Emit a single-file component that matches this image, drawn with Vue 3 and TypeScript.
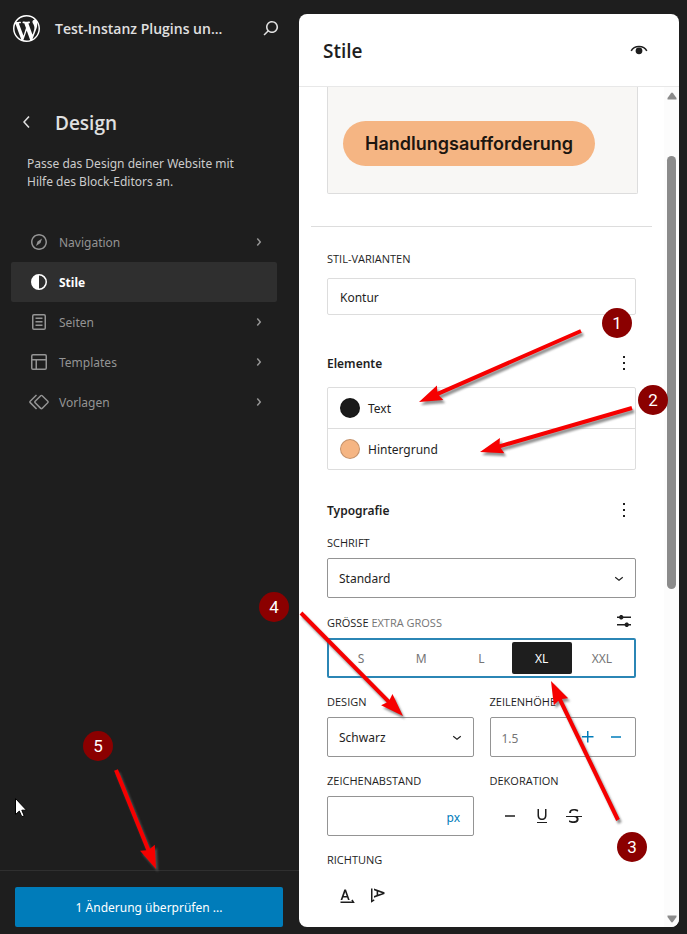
<script setup lang="ts">
import { ref } from 'vue'

interface NavItem {
  label: string
  icon: string
  active?: boolean
}

interface Arrow {
  x1: number
  y1: number
  x2: number
  y2: number
}

interface Marker {
  n: number
  x: number
  y: number
}

const icons: Record<string, string> = {
  search:
    'M13 5c-3.3 0-6 2.7-6 6 0 1.4.5 2.7 1.3 3.7l-3.8 3.8 1.1 1.1 3.8-3.8c1 .8 2.3 1.3 3.7 1.3 3.3 0 6-2.7 6-6S16.3 5 13 5zm0 10.5c-2.5 0-4.5-2-4.5-4.5s2-4.5 4.5-4.5 4.5 2 4.5 4.5-2 4.5-4.5 4.5z',
  chevronLeft: 'M14.6 7l-1.2-1L8 12l5.4 6 1.2-1-4.6-5z',
  chevronRight:
    'M10.8622 8.04053L14.2805 12.0286L10.8622 16.0167L9.72327 15.0405L12.3049 12.0286L9.72327 9.01672L10.8622 8.04053Z',
  chevronDown: 'M17.5 11.6L12 16l-5.5-4.4.9-1.2L12 14l4.5-3.6 1 1.2z',
  navigation:
    'M12 4c-4.4 0-8 3.6-8 8s3.6 8 8 8 8-3.6 8-8-3.6-8-8-8zm0 14.5c-3.6 0-6.5-2.9-6.5-6.5S8.4 5.5 12 5.5s6.5 2.9 6.5 6.5-2.9 6.5-6.5 6.5zM9 16l4.5-3L15 8.4l-4.5 3L9 16z',
  styles: 'M20 12a8 8 0 11-16 0 8 8 0 0116 0zm-1.5 0a6.5 6.5 0 01-6.5 6.5v-13a6.5 6.5 0 016.5 6.5z',
  pages:
    'M15.5 7.5h-7V9h7V7.5Zm-7 3.5h7v1.5h-7V11Zm7 3.5h-7V16h7v-1.5ZM17 4H7a2 2 0 0 0-2 2v12a2 2 0 0 0 2 2h10a2 2 0 0 0 2-2V6a2 2 0 0 0-2-2ZM7 5.5h10a.5.5 0 0 1 .5.5v12a.5.5 0 0 1-.5.5H7a.5.5 0 0 1-.5-.5V6a.5.5 0 0 1 .5-.5Z',
  layout:
    'M18 5.5H6a.5.5 0 00-.5.5v3h13V6a.5.5 0 00-.5-.5zm.5 5H10v8h8a.5.5 0 00.5-.5v-7.5zm-10 0h-3V18a.5.5 0 00.5.5h2.5v-8zM6 4h12a2 2 0 012 2v12a2 2 0 01-2 2H6a2 2 0 01-2-2V6a2 2 0 012-2z',
  symbol:
    'M21.3 10.8l-5.6-5.6c-.7-.7-1.8-.7-2.5 0l-5.6 5.6c-.7.7-.7 1.8 0 2.5l5.6 5.6c.3.3.8.5 1.2.5s.9-.2 1.2-.5l5.6-5.6c.8-.7.8-1.9.1-2.5zm-1 1.4l-5.6 5.6c-.1.1-.3.1-.4 0l-5.6-5.6c-.1-.1-.1-.3 0-.4l5.6-5.6s.1-.1.2-.1.1 0 .2.1l5.6 5.6c.1.1.1.3 0 .4zm-16.6-.4L10 5.5l-1-1-6.3 6.3c-.7.7-.7 1.8 0 2.5L9 19.5l1.1-1.1-6.3-6.3c-.2 0-.2-.2-.1-.3z',
  more: 'M13 19h-2v-2h2v2zm0-6h-2v-2h2v2zm0-6h-2V5h2v2z',
  settings:
    'm19 7.5h-7.628c-.3089-.87389-1.1423-1.5-2.122-1.5-.97966 0-1.81309.62611-2.12197 1.5h-2.12803v1.5h2.12803c.30888.87389 1.14231 1.5 2.12197 1.5.9797 0 1.8131-.62611 2.122-1.5h7.628zM19 15h-2.128c-.3089-.8739-1.1423-1.5-2.122-1.5s-1.8131.6261-2.122 1.5h-7.628v1.5h7.628c.3089.8739 1.1423 1.5 2.122 1.5s1.8131-.6261 2.122-1.5h2.128z',
  plus: 'M11 12.5V17.5H12.5V12.5H17.5V11H12.5V6H11V11H6V12.5H11Z',
  minus: 'M7 11.25h10v1.5H7z',
  underline:
    'M7 18v1h10v-1H7zm5-2c1.5 0 2.6-.4 3.4-1.2.8-.8 1.1-2 1.1-3.5V5H15v5.8c0 1.2-.2 2.1-.6 2.8-.4.7-1.2 1-2.4 1s-2-.3-2.4-1c-.4-.7-.6-1.6-.6-2.8V5H7.5v6.2c0 1.5.4 2.7 1.1 3.5.8.9 1.9 1.3 3.4 1.3z',
  strike:
    'M9.1 9v-.5c0-.6.2-1.1.7-1.4.5-.3 1.2-.5 2-.5.7 0 1.4.1 2.1.3.7.2 1.4.5 2.1.9l.2-1.9c-.6-.3-1.2-.5-1.9-.7-.8-.1-1.6-.2-2.4-.2-1.5 0-2.7.3-3.6 1-.8.7-1.2 1.5-1.2 2.6V9h2zM20 12H4v1h8.3c.3.1.6.2.8.3.5.2.9.5 1.1.8.3.3.4.7.4 1.2 0 .7-.2 1.1-.8 1.5-.5.3-1.2.5-2.1.5-.8 0-1.6-.1-2.4-.3-.8-.2-1.5-.5-2.2-.8L7 18.1c.5.2 1.2.4 2 .6.8.2 1.6.3 2.4.3 1.7 0 3-.3 3.9-1 .9-.7 1.3-1.6 1.3-2.8 0-.9-.2-1.7-.7-2.2H20v-1z',
  horizontal:
    'M8.2 14.4h3.9L13 17h1.7L11 6.5H9.3L5.6 17h1.7l.9-2.6zm2-5.5 1.4 4H8.8l1.4-4zm7.4 7.5-1.3.8.8 1.4H5.5V20h14.3l-2.2-3.6z',
  vertical:
    'M7 5.6v1.7l2.6.9v3.9L7 13v1.7L17.5 11V9.3L7 5.6zm4.2 6V8.8l4 1.4-4 1.4zm-5.7 5.6V5.5H4v14.3l3.6-2.2-.8-1.3-1.3.9z',
}

const nav: NavItem[] = [
  { label: 'Navigation', icon: 'navigation' },
  { label: 'Stile', icon: 'styles', active: true },
  { label: 'Seiten', icon: 'pages' },
  { label: 'Templates', icon: 'layout' },
  { label: 'Vorlagen', icon: 'symbol' },
]

const colors = [
  { label: 'Text', tone: 'dark' },
  { label: 'Hintergrund', tone: 'peach' },
]

const sizes = ['S', 'M', 'L', 'XL', 'XXL']
const size = ref('XL')
const lineHeight = ref('')
const spacing = ref('')

const arrows: Arrow[] = [
  { x1: 581, y1: 331, x2: 419, y2: 402 },
  { x1: 632, y1: 408, x2: 480, y2: 452 },
  { x1: 618, y1: 820, x2: 551, y2: 681 },
  { x1: 301, y1: 613, x2: 403, y2: 716 },
  { x1: 116, y1: 770, x2: 156, y2: 869 },
]

const markers: Marker[] = [
  { n: 1, x: 617, y: 323 },
  { n: 2, x: 653, y: 400 },
  { n: 3, x: 632, y: 847 },
  { n: 4, x: 274, y: 607 },
  { n: 5, x: 98, y: 746 },
]

// Outline of an arrow: a thin shaft that ends in a broad head.
function arrowPoints(a: Arrow): string {
  const len = Math.hypot(a.x2 - a.x1, a.y2 - a.y1)
  const ux = (a.x2 - a.x1) / len
  const uy = (a.y2 - a.y1) / len
  const head = 23
  const at = (along: number, side: number) =>
    `${(a.x1 + ux * along - uy * side).toFixed(1)},${(a.y1 + uy * along + ux * side).toFixed(1)}`
  return [
    at(0, -2),
    at(len - head + 2, -2),
    at(len - head, -8),
    at(len, 0),
    at(len - head, 8),
    at(len - head + 2, 2),
    at(0, 2),
  ].join(' ')
}
</script>

<template>
  <div class="app">
    <aside class="sidebar">
      <header class="site">
        <a class="logo" href="#" aria-label="WordPress">
          <svg viewBox="0 0 20 20" width="27" height="27" fill="currentColor">
            <path
              d="M20 10c0-5.51-4.49-10-10-10C4.48 0 0 4.49 0 10c0 5.52 4.48 10 10 10 5.51 0 10-4.48 10-10zM7.78 15.37L4.37 6.22c.55-.02 1.17-.08 1.17-.08.5-.06.44-1.13-.06-1.11 0 0-1.45.11-2.37.11-.18 0-.37 0-.58-.01C4.12 2.69 6.87 1.11 10 1.11c2.33 0 4.45.87 6.05 2.34-.68-.11-1.65.39-1.65 1.58 0 .74.45 1.36.9 2.1.35.61.55 1.36.55 2.46 0 1.49-1.4 5-1.4 5l-3.03-8.37c.54-.02.82-.17.82-.17.5-.05.44-1.25-.06-1.22 0 0-1.44.12-2.38.12-.87 0-2.33-.12-2.33-.12-.5-.03-.56 1.2-.06 1.22l.92.08 1.26 3.41zM17.41 10c.24-.64.74-1.87.43-4.25.7 1.29 1.05 2.71 1.05 4.25 0 3.29-1.73 6.24-4.4 7.78.97-2.59 1.94-5.2 2.92-7.78zM6.1 18.09C3.12 16.65 1.11 13.53 1.11 10c0-1.3.23-2.48.72-3.59C3.25 10.3 4.67 14.2 6.1 18.09zm4.03-6.63l2.58 6.98c-.86.29-1.76.45-2.71.45-.79 0-1.57-.11-2.29-.33.81-2.38 1.62-4.74 2.42-7.1z"
            />
          </svg>
        </a>
        <a class="site-title" href="#">Test-Instanz Plugins un...</a>
        <button class="plain" type="button" aria-label="Suchen">
          <svg viewBox="0 0 24 24" width="24" height="24" fill="currentColor"><path :d="icons.search" /></svg>
        </button>
      </header>

      <div class="heading">
        <button class="plain" type="button" aria-label="Zurück">
          <svg viewBox="0 0 24 24" width="24" height="24" fill="currentColor"><path :d="icons.chevronLeft" /></svg>
        </button>
        <h1>Design</h1>
      </div>
      <p class="intro">Passe das Design deiner Website mit Hilfe des Block-Editors an.</p>

      <nav class="nav">
        <a v-for="item in nav" :key="item.label" href="#" class="nav-item" :class="{ active: item.active }">
          <svg viewBox="0 0 24 24" width="24" height="24" fill="currentColor" fill-rule="evenodd">
            <path :d="icons[item.icon]" />
          </svg>
          <span>{{ item.label }}</span>
          <svg v-if="!item.active" viewBox="0 0 24 24" width="24" height="24" fill="currentColor">
            <path :d="icons.chevronRight" />
          </svg>
        </a>
      </nav>

      <footer class="save">
        <button type="button" class="primary">1 Änderung überprüfen ...</button>
      </footer>
    </aside>

    <main class="panel">
      <header class="panel-head">
        <h2>Stile</h2>
        <button class="plain" type="button" aria-label="Stilbuch">
          <svg viewBox="0 0 24 24" width="24" height="24">
            <path d="M4.2 12.9C5.600 10.100 8.500 8.500 12 8.500s6.400 1.600 7.800 4.400" fill="none" stroke="currentColor" stroke-width="1.500" />
            <circle cx="12" cy="12.800" r="3.400" fill="currentColor" />
          </svg>
        </button>
      </header>

      <div class="panel-body">
        <div class="content">
          <div class="preview"><span class="cta">Handlungsaufforderung</span></div>
          <hr />
          <div class="form">
            <section class="variants">
              <h3 class="label">Stil-Varianten</h3>
              <button type="button" class="variant">Kontur</button>
            </section>

            <section>
              <div class="section-head">
                <h3>Elemente</h3>
                <button class="plain" type="button" aria-label="Optionen für Elemente">
                  <svg viewBox="0 0 24 24" width="24" height="24" fill="currentColor"><path :d="icons.more" /></svg>
                </button>
              </div>
              <div class="colors">
                <button v-for="c in colors" :key="c.label" type="button" class="color">
                  <i class="swatch" :class="c.tone"></i>
                  <span>{{ c.label }}</span>
                </button>
              </div>
            </section>

            <section class="typography">
              <div class="section-head">
                <h3>Typografie</h3>
                <button class="plain" type="button" aria-label="Optionen für Typografie">
                  <svg viewBox="0 0 24 24" width="24" height="24" fill="currentColor"><path :d="icons.more" /></svg>
                </button>
              </div>

              <div class="field">
                <label class="label" for="font">Schrift</label>
                <div class="box">
                  <select id="font"><option>Standard</option></select>
                  <svg viewBox="0 0 24 24" width="18" height="18" fill="currentColor"><path :d="icons.chevronDown" /></svg>
                </div>
              </div>

              <div class="field" role="radiogroup" aria-labelledby="size-label">
                <div class="label size-head">
                  <span id="size-label">Grösse <em>Extra gross</em></span>
                  <button class="plain" type="button" aria-label="Individuelle Größe">
                    <svg viewBox="0 0 24 24" width="24" height="24" fill="currentColor"><path :d="icons.settings" /></svg>
                  </button>
                </div>
                <div class="sizes">
                  <label v-for="s in sizes" :key="s" :class="{ chosen: s === size }">
                    <input v-model="size" type="radio" name="size" :value="s" />
                    <span>{{ s }}</span>
                  </label>
                </div>
              </div>

              <div class="pair">
                <div class="field">
                  <label class="label" for="appearance">Design</label>
                  <div class="box">
                    <select id="appearance"><option>Schwarz</option></select>
                    <svg viewBox="0 0 24 24" width="18" height="18" fill="currentColor"><path :d="icons.chevronDown" /></svg>
                  </div>
                </div>
                <div class="field">
                  <label class="label" for="line-height">Zeilenhöhe</label>
                  <div class="box spin">
                    <input id="line-height" v-model="lineHeight" type="text" placeholder="1.5" />
                    <button class="plain" type="button" aria-label="Erhöhen">
                      <svg viewBox="0 0 24 24" width="24" height="24" fill="currentColor"><path :d="icons.plus" /></svg>
                    </button>
                    <button class="plain" type="button" aria-label="Verringern">
                      <svg viewBox="0 0 24 24" width="24" height="24" fill="currentColor"><path :d="icons.minus" /></svg>
                    </button>
                  </div>
                </div>
                <div class="field">
                  <label class="label" for="spacing">Zeichenabstand</label>
                  <div class="box">
                    <input id="spacing" v-model="spacing" type="text" />
                    <select class="unit" aria-label="Einheit"><option>px</option></select>
                  </div>
                </div>
                <div class="field">
                  <span class="label">Dekoration</span>
                  <div class="tools">
                    <button class="plain" type="button" aria-label="Keine">
                      <svg viewBox="0 0 24 24" width="24" height="24" fill="currentColor"><path :d="icons.minus" /></svg>
                    </button>
                    <button class="plain" type="button" aria-label="Unterstrichen">
                      <svg viewBox="0 0 24 24" width="24" height="24" fill="currentColor"><path :d="icons.underline" /></svg>
                    </button>
                    <button class="plain" type="button" aria-label="Durchgestrichen">
                      <svg viewBox="0 0 24 24" width="24" height="24" fill="currentColor"><path :d="icons.strike" /></svg>
                    </button>
                  </div>
                </div>
                <div class="field">
                  <span class="label">Richtung</span>
                  <div class="tools">
                    <button class="plain" type="button" aria-label="Horizontal">
                      <svg viewBox="0 0 24 24" width="24" height="24" fill="currentColor"><path :d="icons.horizontal" /></svg>
                    </button>
                    <button class="plain" type="button" aria-label="Vertikal">
                      <svg viewBox="0 0 24 24" width="24" height="24" fill="currentColor"><path :d="icons.vertical" /></svg>
                    </button>
                  </div>
                </div>
              </div>
            </section>
          </div>
        </div>

        <div class="scrollbar" aria-hidden="true">
          <svg viewBox="0 0 10 8" width="10" height="8"><path d="M4 1.200a1.300 1.300 0 0 1 2 0L9.500 6v1.500H.5V6z" /></svg>
          <div class="track"><div class="thumb"></div></div>
          <svg viewBox="0 0 10 8" width="10" height="8"><path d="M4 6.800a1.300 1.300 0 0 0 2 0L9.500 2V.5H.5V2z" /></svg>
        </div>
      </div>
    </main>

    <svg class="notes" viewBox="0 0 687 934" width="687" height="934">
      <g class="arrows">
        <polygon v-for="(a, i) in arrows" :key="i" :points="arrowPoints(a)" />
      </g>
      <g v-for="m in markers" :key="m.n">
        <circle :cx="m.x" :cy="m.y" r="15" />
        <text :x="m.x" :y="m.y + 6" text-anchor="middle">{{ m.n }}</text>
      </g>
      <path class="pointer" d="M15.500 798.500v16l3.800-3.400 2.500 5.600 2.400-1-2.400-5.500h4.700z" />
    </svg>
  </div>
</template>

<style>
body {
  margin: 0;
  background: #1e1e1e;
}
</style>

<style scoped>
.app,
.app * {
  box-sizing: border-box;
}

.app {
  position: relative;
  display: grid;
  grid-template-columns: 299px minmax(0, 1fr);
  min-height: 100vh;
  background: #1e1e1e;
  color: #1e1e1e;
  font: 12px/18px 'Noto Sans', 'Open Sans', sans-serif;
}

h1,
h2,
h3,
p {
  margin: 0;
}

a {
  color: inherit;
  text-decoration: none;
}

svg {
  display: block;
  flex: none;
}

button,
input,
select {
  font: inherit;
  color: inherit;
}

.plain {
  display: block;
  padding: 0;
  border: 0;
  background: none;
}

/* Sidebar */
.sidebar {
  display: flex;
  flex-direction: column;
  color: #e0e0e0;
}

.site {
  display: flex;
  align-items: center;
  height: 56px;
  padding: 0 16px 0 13px;
}

.logo {
  margin-right: 15px;
  color: #fff;
}

.site-title {
  flex: 1;
  padding-top: 2px;
  font-family: 'Open Sans', sans-serif;
  font-size: 14px;
  line-height: 20px;
  font-weight: 600;
  white-space: nowrap;
}

.heading {
  display: flex;
  align-items: center;
  gap: 16px;
  padding: 53px 15px 0;
}

.heading h1,
.panel-head h2 {
  padding-top: 2px;
  font-family: 'Open Sans', sans-serif;
  font-size: 19px;
  line-height: 24px;
  font-weight: 600;
}

.intro {
  padding: 20px 48px 0 27px;
  color: #ccc;
}

.nav {
  padding: 31px 22px 0 11px;
}

.nav-item {
  display: flex;
  align-items: center;
  gap: 8px;
  height: 40px;
  padding: 0 6px 0 16px;
  border-radius: 2px;
  color: #949494;
}

.nav-item span {
  flex: 1;
  padding-top: 2px;
}

.nav-item.active {
  background: #2f2f2f;
  color: #fff;
  font-weight: 700;
}

.save {
  margin-top: auto;
  padding: 16px 16px 7px 15px;
  border-top: 1px solid #2f2f2f;
}

.primary {
  width: 100%;
  height: 40px;
  padding: 2px 12px 0;
  border: 0;
  border-radius: 2px;
  background: #007cba;
  color: #fff;
}

/* Panel */
.panel {
  display: flex;
  flex-direction: column;
  margin: 14px 8px 7px 0;
  border-radius: 8px;
  background: #fff;
  overflow: hidden;
}

.panel-head {
  display: flex;
  align-items: center;
  justify-content: space-between;
  height: 73px;
  padding: 0 28px 0 24px;
  border-bottom: 1px solid #e8e8e8;
}

.panel-body {
  flex: 1;
  display: flex;
}

.content {
  flex: 1;
  min-width: 0;
}

.preview {
  margin: 0 26px 0 28px;
  padding: 34px 15px 27px;
  border: 1px solid #ddd;
  border-top: 0;
  border-radius: 0 0 2px 2px;
  background: #f8f7f5;
}

.cta {
  display: inline-block;
  padding: 0 22px;
  border-radius: 23px;
  background: #f5b583;
  color: #1c1610;
  font: 600 18px/45px Inter, 'Open Sans', sans-serif;
  vertical-align: top;
}

hr {
  height: 1px;
  margin: 32px 12px 0;
  border: 0;
  background: #ddd;
}

.form {
  padding: 23px 28px 12px;
}

.label {
  display: block;
  font-family: 'Open Sans', sans-serif;
  font-size: 11px;
  line-height: 18px;
  font-weight: 500;
  text-transform: uppercase;
}

.label em {
  color: #757575;
  font-style: normal;
}

.variant {
  display: block;
  width: 100%;
  height: 37px;
  margin: 10px 0 36px;
  padding: 2px 12px 0;
  border: 1px solid #ddd;
  border-radius: 2px;
  background: #fff;
  text-align: left;
}

.section-head {
  display: flex;
  align-items: center;
  justify-content: space-between;
}

.section-head h3 {
  padding-top: 2px;
  font-size: 12px;
  line-height: 22px;
  font-weight: 600;
}

.colors {
  display: flex;
  flex-direction: column;
  margin: 12px 0 28px;
  border: 1px solid #ddd;
  border-radius: 2px;
}

.color {
  display: flex;
  align-items: center;
  gap: 8px;
  height: 40px;
  padding: 0 12px;
  border: 0;
  background: none;
}

.color span {
  padding-top: 2px;
}

.color + .color {
  height: 41px;
  border-top: 1px solid #ddd;
}

.swatch {
  width: 20px;
  height: 20px;
  border: 1px solid rgba(0, 0, 0, 0.2);
  border-radius: 50%;
}

.swatch.dark {
  background: #1a1a1a;
}

.swatch.peach {
  background: #f5b583;
}

.typography {
  display: flex;
  flex-direction: column;
  gap: 15px;
}

.typography .section-head {
  margin-bottom: -3px;
}

.field {
  display: flex;
  flex-direction: column;
  gap: 6px;
  min-width: 0;
}

.box {
  display: flex;
  align-items: center;
  position: relative;
  height: 40px;
  border: 1px solid #949494;
  border-radius: 2px;
}

.box select,
.box input {
  flex: 1;
  min-width: 0;
  width: 100%;
  height: 100%;
  padding: 2px 11px 0;
  border: 0;
  outline: 0;
  background: none;
  appearance: none;
}

.box > svg {
  position: absolute;
  right: 7px;
  pointer-events: none;
}

.box .unit {
  flex: none;
  width: 38px;
  padding: 4px 12px 0;
  color: #007cba;
}

.box input::placeholder {
  color: #757575;
  opacity: 1;
}

.spin {
  gap: 4px;
  padding-right: 7px;
}

.spin button {
  color: #007cba;
}

.size-head {
  display: flex;
  align-items: center;
  justify-content: space-between;
  height: 19px;
}

.size-head .plain {
  margin: -5px 0 -1px;
}

.sizes {
  display: grid;
  grid-template-columns: repeat(5, 1fr);
  height: 40px;
  padding: 2px;
  border: 2px solid #2b86b5;
  border-radius: 2px;
}

.sizes label {
  position: relative;
  display: flex;
  align-items: center;
  justify-content: center;
  padding-top: 2px;
  border-radius: 2px;
  color: #757575;
}

.sizes input {
  position: absolute;
  inset: 0;
  margin: 0;
  opacity: 0;
}

.sizes .chosen {
  background: #1e1e1e;
  color: #fff;
}

.pair {
  display: grid;
  grid-template-columns: 1fr 1fr;
  gap: 15px 16px;
}

.tools {
  display: flex;
  align-items: center;
  gap: 8px;
  height: 40px;
  padding-left: 8px;
}

/* Scrollbar */
.scrollbar {
  display: flex;
  flex-direction: column;
  align-items: center;
  width: 15px;
  padding: 5px 0 4px;
  background: #fcfcfc;
}

.scrollbar path {
  fill: #8b8b8b;
}

.track {
  flex: 1;
  display: flex;
  flex-direction: column;
  width: 9px;
  padding-top: 56px;
}

.thumb {
  height: 57%;
  border-radius: 5px;
  background: #8b8b8b;
}

/* Annotations lying over the interface */
.notes {
  position: absolute;
  top: 0;
  left: 0;
  pointer-events: none;
}

.arrows {
  fill: #f60000;
  filter: drop-shadow(2px 3px 1px rgba(100, 100, 100, 0.7));
}

.notes circle {
  fill: #8b0000;
}

.notes text {
  fill: #fff;
  font: 400 17px Roboto, sans-serif;
}

.pointer {
  fill: #fff;
  stroke: #000;
  stroke-width: 1;
}
</style>
